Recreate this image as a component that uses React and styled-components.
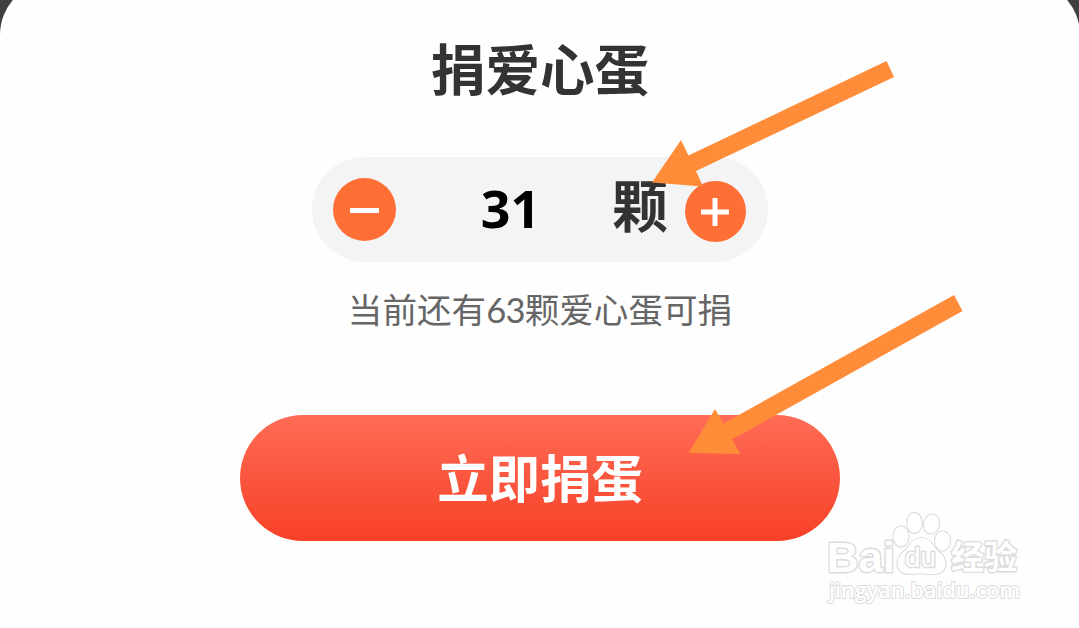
import React from 'react'
import styled, {createGlobalStyle} from "styled-components";

const GlobalStyle = createGlobalStyle`
    body {
        margin: 0;
        background: #404040;
        overflow: hidden;
    }
`;

const Page = styled.div`
    position: relative;
    display: flex;
    width: 1079px;
    height: 628px;
    overflow: hidden;
    font-family: "Lato", "Noto Sans CJK SC", sans-serif;
`;

const Sheet = styled.div`
    display: flex;
    flex-direction: column;
    align-items: center;
    flex: 0 0 1080px;
    box-sizing: border-box;
    height: 700px;
    margin-top: -19px;
    padding-top: 48px;
    background: #fefefe;
    border-radius: 54px 54px 0 0;
`;

const Title = styled.h1`
    margin: 0;
    height: 80px;
    line-height: 80px;
    font-size: 54.6px;
    font-weight: 700;
    color: #333;
`;

const Stepper = styled.div`
    display: flex;
    align-items: center;
    box-sizing: border-box;
    width: 456px;
    height: 105px;
    margin-top: 48px;
    padding: 0 22px 0 21px;
    background: #f4f4f4;
    border-radius: 53px;
`;

const StepButton = styled.button`
    display: flex;
    flex: none;
    width: ${props => props.$size}px;
    height: ${props => props.$size}px;
    margin: ${props => props.$offset || 0}px 0 0;
    padding: 0;
    border: 0;
    border-radius: 50%;
    background: #ff6e35;
`;

const Count = styled.span`
    flex: 1;
    height: 105px;
    padding-left: 13px;
    text-align: center;
    line-height: 101px;
    font-family: "Open Sans", sans-serif;
    font-size: 52px;
    font-weight: 700;
    color: #000;
`;

const Unit = styled.span`
    margin-right: 17px;
    height: 105px;
    line-height: 98px;
    font-size: 56px;
    font-weight: 700;
    color: #333;
`;

const Hint = styled.p`
    margin: 23px 0 0;
    height: 50px;
    line-height: 50px;
    font-size: 34.6px;
    color: #666;
`;

const Digits = styled.span`
    letter-spacing: -0.8px;
`;

const Submit = styled.button`
    width: 600px;
    height: 126px;
    margin-top: 80px;
    padding: 0;
    border: 0;
    border-radius: 63px;
    background: linear-gradient(#ff6c57, #f74026);
    font-family: inherit;
    font-size: 51.4px;
    font-weight: 700;
    line-height: 126px;
    color: #fff;
`;

const Arrows = styled.svg`
    position: absolute;
    top: 0;
    left: 0;
    pointer-events: none;
`;

const Mark = styled.svg`
    position: absolute;
    left: 820px;
    top: 505px;
    font-family: "Liberation Sans", "Noto Sans CJK SC", sans-serif;
    fill: #fff;
    stroke: #dcdcdc;
    stroke-width: 2.8px;
    stroke-linejoin: round;
    paint-order: stroke;
`;

function Watermark() {
    return (
        <Mark width="210" height="110">
            <text x="7" y="67" fontSize="43" fontWeight="700" textLength="68" lengthAdjust="spacingAndGlyphs">Bai</text>
            <g strokeWidth="2.2">
                <ellipse cx="81" cy="31.500" rx="7.500" ry="10"/>
                <ellipse cx="94.500" cy="18" rx="7.300" ry="10"/>
                <ellipse cx="111.500" cy="19" rx="7.500" ry="9.500" transform="rotate(12 111.500 19)"/>
                <ellipse cx="122.500" cy="36" rx="7.500" ry="9.500"/>
                <path d="M101 33c-6 0-9 3-12 8-4 6-11 8-11.500 17-.3 7 5 11 12 11 5 0 7-.8 12-.8s7 .8 12 .8c7 0 12.500-4 12-11-.5-9-8-11-12-17-3-5-6.500-8-12.500-8z"/>
            </g>
            <text x="85" y="62" fontSize="27" textLength="31" lengthAdjust="spacingAndGlyphs">du</text>
            <text x="131" y="64" fontSize="33" fontWeight="700">经验</text>
            <text x="9" y="93" fontSize="22" fontWeight="600" fontFamily="Open Sans" strokeWidth="2" textLength="191" lengthAdjust="spacingAndGlyphs">jingyan.baidu.com</text>
        </Mark>
    )
}

export default function App() {
    return (
        <Page>
            <GlobalStyle/>
            <Sheet>
                <Title>捐爱心蛋</Title>
                <Stepper>
                    <StepButton $size={63} aria-label="-">
                        <svg width="63" height="63">
                            <path d="M17 32.500h29" stroke="#fff" strokeWidth="5"/>
                        </svg>
                    </StepButton>
                    <Count>31</Count>
                    <Unit>颗</Unit>
                    <StepButton $size={61} $offset={3} aria-label="+">
                        <svg width="61" height="61">
                            <path d="M16 31h28M30 17v28" stroke="#fff" strokeWidth="5"/>
                        </svg>
                    </StepButton>
                </Stepper>
                <Hint>当前还有<Digits>63</Digits>颗爱心蛋可捐</Hint>
                <Submit>立即捐蛋</Submit>
            </Sheet>
            <Arrows width="1079" height="628" fill="#ff8c39">
                <path d="M652 182.500L681 140l7.500 15.500L886.500 61l7.500 16L696 171l7 15.500z"/>
                <path d="M688.500 453L715 409l8.500 14.500L954 295l8.500 16L732 439.500l8.500 14.500z"/>
            </Arrows>
            <Watermark/>
        </Page>
    )
}
